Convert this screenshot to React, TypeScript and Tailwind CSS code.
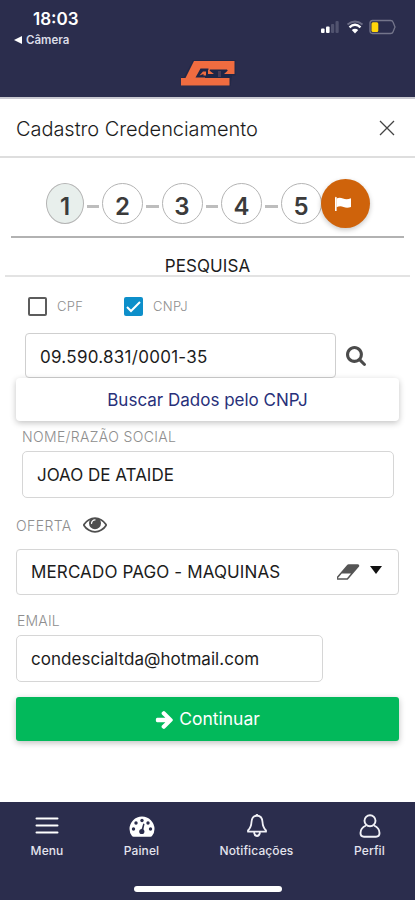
import type { ReactNode } from "react";

const STEPS = ["1", "2", "3", "4", "5"];

function Logo() {
    return (
        <svg width="56" height="28" viewBox="0 0 56 28" className="shrink-0">
            <path d="M13 0h42.500v15.500H52l-1.500 10.500H1v-9h3z" fill="#1d2445" opacity=".6" />
            <path d="M14 1h40.500v13h-5.500L46 12H32l-2 2.200h-5V18h24.500v7.500H1v-7.500h4.500z" fill="#f06c40" />
            <path d="M20.500 8.500h8v5.500h21v3.500H15.500z" fill="#1f2647" />
            <path d="M19.500 15.500l3.500-4h3v4h-2.500v-1.500z" fill="#f06c40" />
            <path d="M30 9.500h17l1 1.500-4 4H33.500l-4-4z" fill="#1f2647" />
            <path d="M28 9.500l6 4.500h-6zM49 9.500V14h-5z" fill="#f06c40" />
            <path d="M38 11h3v6h-3z" fill="#4a3c55" />
        </svg>
    );
}

function StatusIcons() {
    return (
        <div className="flex items-center">
            <svg width="22" height="16" viewBox="0 0 22 16">
                <rect x="1" y="9.500" width="3.600" height="4.500" rx="1" fill="#fff" />
                <rect x="6" y="7.500" width="3.600" height="6.500" rx="1" fill="#fff" />
                <rect x="11" y="5" width="3.200" height="9" rx="1" fill="#51536f" />
                <rect x="15.500" y="2" width="3.200" height="12" rx="1" fill="#51536f" />
            </svg>
            <svg width="18" height="16" viewBox="0 0 18 16" className="ml-1" fill="none">
                <path d="M1.500 5.500q7.500-6 15 0" stroke="#6a6b84" strokeWidth="1.800" />
                <path d="M3.500 8.300q5.500-5 11 0" stroke="#fff" strokeWidth="2.400" />
                <path d="M5.800 11q3.200-2.600 6.400 0L9 14.500z" fill="#fff" />
            </svg>
            <svg width="29" height="16" viewBox="0 0 29 16" className="ml-1" fill="none">
                <path d="M4.500 1.500h18q2 0 2.500 1.500l2 5-2 5q-.5 1.500-2.500 1.500h-18Q2 14.500 2 12V4q0-2.500 2.500-2.500z" stroke="#74758b" strokeWidth="1.300" />
                <rect x="3.500" y="3.200" width="6.800" height="9.800" rx="1.500" fill="#ffd60a" />
            </svg>
        </div>
    );
}

function Glyph({ d, box, className }: { d: string; box: string; className: string }) {
    return (
        <svg viewBox={box} className={className} fill="currentColor">
            <path d={d} />
        </svg>
    );
}

const SEARCH = "M1216 832q0-185-131.500-316.500t-316.500-131.500-316.500 131.500-131.500 316.500 131.500 316.500 316.500 131.500 316.500-131.500 131.500-316.500zm512 832q0 52-38 90t-90 38q-54 0-90-38l-343-342q-179 124-399 124-143 0-273.500-55.500t-225-150-150-225-55.500-273.500 55.500-273.500 150-225 225-150 273.500-55.500 273.500 55.500 225 150 150 225 55.500 273.500q0 220-124 399l343 343q37 37 37 90z";
const EYE = "M1664 960q-152-236-381-353 61 104 61 225 0 185-131.500 316.500t-316.500 131.500-316.500-131.500-131.500-316.500q0-121 61-225-229 117-381 353 133 205 333.500 326.500t434.500 121.500 434.500-121.500 333.500-326.500zm-720-384q0-20-14-34t-34-14q-125 0-214.500 89.500t-89.500 214.500q0 20 14 34t34 14 34-14 14-34q0-86 61-147t147-61q20 0 34-14t14-34zm848 384q0 34-20 69-140 230-376.500 368.500t-499.500 138.500-499.500-139-376.500-368q-20-35-20-69t20-69q140-229 376.500-368t499.500-139 499.500 139 376.500 368q20 35 20 69z";
const ARROW = "M1600 960q0 54-37 91l-651 651q-39 37-91 37-51 0-90-37l-75-75q-38-38-38-91t38-91l293-293h-704q-52 0-84.500-37.500t-32.500-90.500v-128q0-53 32.500-90.500t84.500-37.500h704l-293-294q-38-36-38-90t38-90l75-75q38-38 90-38 53 0 91 38l651 651q37 35 37 90z";
const ERASER = "M832 1408l336-384h-768l-336 384h768zm1013-1077q15 34 9.500 71.500t-30.500 65.500l-896 1024q-38 44-96 44h-768q-38 0-69.500-20.500t-47.500-54.500q-15-34-9.500-71.500t30.500-65.500l896-1024q38-44 96-44h768q38 0 69.500 20.500t47.500 54.500z";

function NavItem({ label, className, children }: { label: string; className: string; children: ReactNode }) {
    return (
        <div className={`flex flex-col items-center ${className}`}>
            <div className="flex h-[27px] items-center">{children}</div>
            <span className="mt-[3px] whitespace-nowrap text-[12px] font-medium leading-4 tracking-[0.1px] text-[#e4e4ee]">{label}</span>
        </div>
    );
}

export default function App() {
    return (
        <div className="flex h-[900px] w-[415px] flex-col overflow-hidden bg-white font-['Inter',sans-serif] text-[#1c1c1c]">
            <header className="flex h-[97px] shrink-0 flex-col bg-[#2b2d4d]">
                <div className="flex h-[53px] justify-between pl-[14px] pr-[18px] pt-[9px]">
                    <div>
                        <div className="pl-[19px] text-[17px] font-semibold leading-[21px] text-white">18:03</div>
                        <div className="mt-[2px] flex items-center gap-1 text-[11.500px] font-semibold leading-4 text-[#dcdde8]">
                            <svg width="8" height="8" viewBox="0 0 8 8">
                                <path d="M0 4l8-4v8z" fill="#fff" />
                            </svg>
                            Câmera
                        </div>
                    </div>
                    <div className="pt-[10px]">
                        <StatusIcons />
                    </div>
                </div>
                <div className="flex justify-center pt-[7px]">
                    <Logo />
                </div>
            </header>

            <div className="flex h-[61px] shrink-0 items-center justify-between border-b-2 border-t-2 border-b-[#dedede] border-t-[#c9c9d1] pl-4 pr-[20px]">
                <h1 className="whitespace-nowrap pt-[2px] text-[20px] font-light tracking-[-0.05px]">Cadastro Credenciamento</h1>
                <svg width="16" height="16" viewBox="0 0 16 16" stroke="#444" strokeWidth="1.300" className="mt-px">
                    <path d="M1 1l14 14M15 1L1 15" />
                </svg>
            </div>

            <div className="flex h-[78px] shrink-0 pl-[46px] pt-[21px]">
                {STEPS.map((s, i) => (
                    <div key={s} className="flex h-[49px] items-center">
                        {i > 0 && <span className={`mt-[5px] h-[3px] bg-[#bdbdbd] ${i === 1 ? "mx-[3px] w-3" : "mx-[3px] w-[12.500px]"}`} />}
                        <span
                            className={`flex h-[41px] items-center justify-center rounded-[50%] border border-[#b4b4b4] pt-[7px] text-[24px] font-semibold text-[#3b3b3b] ${
                                i === 0 ? "w-[38px] bg-[#e8efec]" : "w-[41px] bg-white"
                            }`}
                        >
                            {s}
                        </span>
                    </div>
                ))}
                <div className="-ml-px flex size-[49px] items-center justify-center rounded-full bg-[#cf630b] shadow-[0_2px_5px_rgba(0,0,0,0.22)]">
                    <svg width="18" height="18" viewBox="0 0 18 18" fill="#fff" className="-ml-1">
                        <path d="M1 2.500q.8-1.500 1.600 0V16H1z" />
                        <path d="M2.500 3.500q3-1.500 6.500 0t8-.2v8.700q-4 1.500-7.500 0t-7 .3z" />
                    </svg>
                </div>
            </div>
            <div className="mx-[11px] h-[2px] shrink-0 bg-[#b2b2b2]" />

            <div className="mx-[5px] flex h-[39px] shrink-0 justify-center border-b-2 border-[#e3e3e3] pt-[18px]">
                <span className="text-[17px] leading-5 tracking-[0.1px]">PESQUISA</span>
            </div>

            <div className="mt-[20px] flex h-[19px] shrink-0 items-center pl-[28px] text-[13px] font-light tracking-[0.35px] text-[#8e8e8e]">
                <span className="size-[19px] rounded-[2px] border-2 border-[#5c5c5c]" />
                <span className="ml-[10px] w-[67px] pt-px">CPF</span>
                <span className="flex size-[19px] items-center justify-center rounded-[2px] bg-[#0d8fca]">
                    <svg width="15" height="12" viewBox="0 0 15 12" fill="none" stroke="#fff" strokeWidth="2">
                        <path d="M1 6l4 4 9-9" />
                    </svg>
                </span>
                <span className="ml-[10px] pt-px">CNPJ</span>
            </div>

            <div className="mt-[17px] flex h-[45px] shrink-0 items-center pl-[25px]">
                <div className="flex h-[45px] w-[311px] items-center rounded-[4px] border border-[#cfcfcf] pl-[14px] pt-[4px] text-[17px] tracking-[0.27px]">09.590.831/0001-35</div>
                <Glyph d={SEARCH} box="64 128 1664 1664" className="ml-[10px] size-5 text-[#4b4b4b]" />
            </div>

            <button className="mx-4 flex h-[43px] shrink-0 items-center justify-center rounded-[4px] bg-white pt-[3px] text-[17px] text-[#28307a] shadow-[0_2px_6px_rgba(0,0,0,0.24)]">
                Buscar Dados pelo CNPJ
            </button>

            <label className="mt-[7px] h-[17px] shrink-0 pl-[22px] text-[14px] font-light leading-[17px] tracking-[0.35px] text-[#8e8e8e]">NOME/RAZÃO SOCIAL</label>
            <div className="ml-[22px] mt-[6px] flex h-[47px] w-[372px] shrink-0 items-center rounded-[5px] border border-[#d6d6d6] pl-[14px] pt-[3px] text-[17px]">JOAO DE ATAIDE</div>

            <div className="mt-[17px] flex h-5 shrink-0 items-center pl-4 text-[14px] font-light tracking-[0.4px] text-[#8e8e8e]">
                OFERTA
                <Glyph d={EYE} box="0 384 1792 1152" className="ml-[11px] h-4 w-6 text-[#4f4f4f]" />
            </div>

            <div className="mx-4 mt-[14px] flex h-[46px] shrink-0 items-center rounded-[4px] border border-[#d6d6d6] pl-[14px] pr-[16px] text-[17px]">
                <span className="grow whitespace-nowrap pt-px tracking-[0.13px]">MERCADO PAGO - MAQUINAS</span>
                <Glyph d={ERASER} box="0 256 1920 1280" className="h-[16px] w-[23px] text-[#555]" />
                <svg width="12" height="8" viewBox="0 0 12 8" className="-mt-1 ml-[10px]">
                    <path d="M0 0h12L6 8z" fill="#111" />
                </svg>
            </div>

            <label className="mt-[17px] h-[17px] shrink-0 pl-[17px] text-[14px] font-light leading-[17px] tracking-[0.2px] text-[#8e8e8e]">EMAIL</label>
            <div className="ml-4 mt-[6px] flex h-[47px] w-[307px] shrink-0 items-center rounded-[5px] border border-[#d6d6d6] pl-[14px] pt-[3px] text-[17px] tracking-[0.05px]">condescialtda@hotmail.com</div>

            <button className="mx-4 mt-[15px] flex h-[44px] shrink-0 items-center justify-center gap-[6px] rounded-[3px] bg-[#02b95b] text-[17.500px] text-white shadow-[0_2px_6px_rgba(0,0,0,0.25)]">
                <Glyph d={ARROW} box="64 180 1536 1560" className="mt-[2px] size-[18px]" />
                Continuar
            </button>

            <nav className="mt-auto flex h-[98px] shrink-0 flex-col items-center justify-between bg-[#2b2d4d] pb-[8px]">
                <div className="flex w-full pt-[11px]">
                    <NavItem label="Menu" className="w-[94px]">
                        <svg width="24" height="20" viewBox="0 0 24 20" stroke="#fff" strokeWidth="2" strokeLinecap="round" className="-mt-[3px]">
                            <path d="M1.500 3.500h21M1.500 10.500h21M1.500 17.500h21" />
                        </svg>
                    </NavItem>
                    <NavItem label="Painel" className="w-[95px]">
                        <svg width="26" height="21" viewBox="0 0 26 21">
                            <path d="M3 20Q.5 17 .5 13a12.500 12.500 0 0 1 25 0q0 4-2.500 7-.5.700-1.500.700h-17Q3.500 20.700 3 20z" fill="#fff" />
                            <g fill="#2b2d4d">
                                <circle cx="4.500" cy="13" r="1.700" />
                                <circle cx="7" cy="7" r="1.700" />
                                <circle cx="13" cy="4.500" r="1.700" />
                                <circle cx="19" cy="7" r="1.700" />
                                <circle cx="21.500" cy="13" r="1.700" />
                                <circle cx="12.800" cy="15.500" r="2.600" />
                                <path d="M12 15l2.300-7.500 1.200.4L14 15.500z" />
                            </g>
                        </svg>
                    </NavItem>
                    <NavItem label="Notificações" className="w-[135px]">
                        <svg width="22" height="25" viewBox="0 0 22 25" fill="none" stroke="#f1f1f7" strokeWidth="1.800" strokeLinejoin="round" className="-mt-[2px]">
                            <path d="M11 2.500c-3.500.3-5.300 3-5.500 6.500-.2 4-.9 6-3.500 8.500v1.200h18v-1.200c-2.600-2.500-3.300-4.500-3.500-8.500-.2-3.500-2-6.200-5.500-6.500zM11 1v2M8 19.500q.7 3.500 3 3.500t3-3.500" />
                        </svg>
                    </NavItem>
                    <NavItem label="Perfil" className="w-[91px]">
                        <svg width="22" height="24" viewBox="0 0 22 24" fill="none" stroke="#f1f1f7" strokeWidth="1.900" strokeLinejoin="round" className="-mt-[2px]">
                            <circle cx="11" cy="6.800" r="5.500" />
                            <path d="M7 11.500C3.500 13 1.500 15.500 1.500 19c0 2.500 1.300 3.700 3.500 3.700h12c2.200 0 3.500-1.200 3.500-3.700 0-3.500-2-6-5.500-7.500" />
                        </svg>
                    </NavItem>
                </div>
                <div className="h-[6px] w-[148px] rounded-full bg-white" />
            </nav>
        </div>
    );
}
